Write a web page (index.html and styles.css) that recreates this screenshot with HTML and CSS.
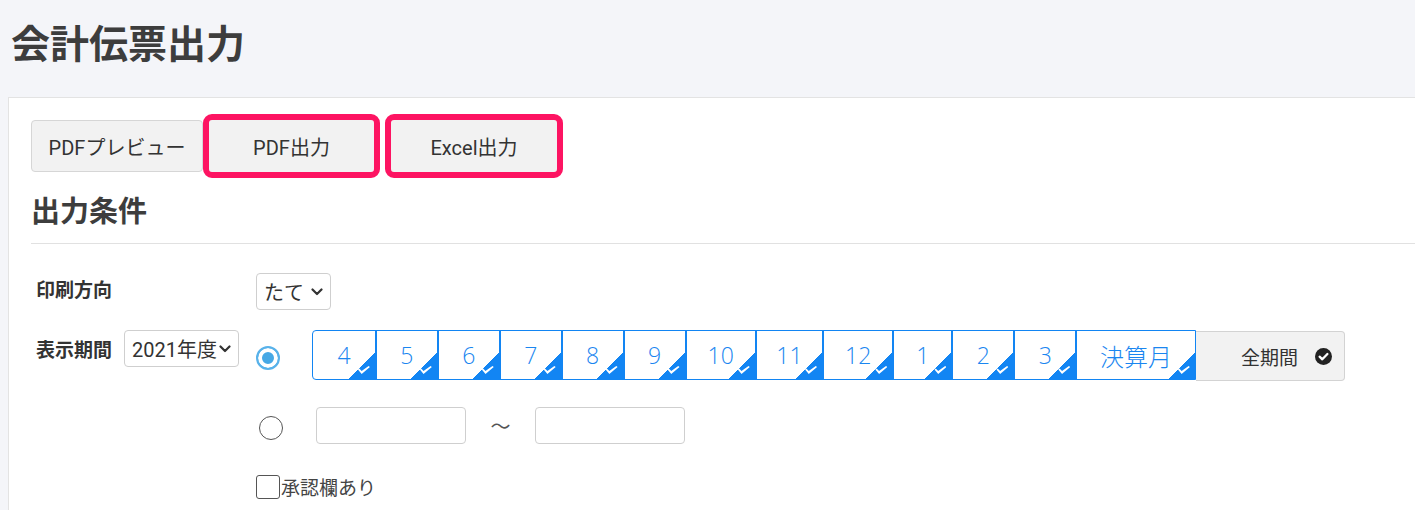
FILE: index.html
```html
<!DOCTYPE html>
<html lang="ja">
<head>
<meta charset="utf-8">
<title>会計伝票出力</title>
<link rel="stylesheet" href="styles.css">
</head>
<body>
<header class="page-head">
  <h1 class="page-title">会計伝票出力</h1>
</header>
<main class="panel">
  <div class="actions">
    <button class="btn btn-preview" type="button">PDFプレビュー</button>
    <button class="btn btn-hl btn-pdf" type="button">PDF出力</button>
    <button class="btn btn-hl btn-excel" type="button">Excel出力</button>
  </div>
  <h2 class="section-title">出力条件</h2>
  <hr class="rule">
  <div class="form">
    <div class="label label-orient">印刷方向</div>
    <div class="select select-orient">
      <span>たて</span>
      <svg class="chev" width="12" height="8" viewBox="0 0 12 8"><path d="M1.5 1.5 L6 6 L10.5 1.5" fill="none" stroke="#333" stroke-width="2.2" stroke-linecap="round" stroke-linejoin="round"/></svg>
    </div>

    <div class="label label-period">表示期間</div>
    <div class="select select-year">
      <span>2021年度</span>
      <svg class="chev" width="12" height="8" viewBox="0 0 12 8"><path d="M1.5 1.5 L6 6 L10.5 1.5" fill="none" stroke="#333" stroke-width="2.2" stroke-linecap="round" stroke-linejoin="round"/></svg>
    </div>
    <div class="period">
      <div class="period-line">
        <input class="radio radio-on" type="radio" name="mode" checked>
        <div class="months">
          <span class="month">4</span>
          <span class="month">5</span>
          <span class="month">6</span>
          <span class="month">7</span>
          <span class="month">8</span>
          <span class="month">9</span>
          <span class="month month-d2">10</span>
          <span class="month month-d2 month-11">11</span>
          <span class="month month-d2">12</span>
          <span class="month month-1">1</span>
          <span class="month">2</span>
          <span class="month">3</span>
          <span class="month month-close">決算月</span>
        </div>
        <button class="all" type="button">
          <span>全期間</span>
          <svg width="17" height="17" viewBox="0 0 17 17"><circle cx="8.5" cy="8.5" r="8.5" fill="#222"/><path d="M4.6 8.7 L7.3 11.3 L12.4 6" fill="none" stroke="#fff" stroke-width="2.3" stroke-linecap="round" stroke-linejoin="round"/></svg>
        </button>
      </div>
      <div class="period-line range-line">
        <input class="radio radio-off" type="radio" name="mode">
        <input class="date-input" type="text">
        <span class="tilde">〜</span>
        <input class="date-input" type="text">
      </div>
      <label class="approve"><input class="check" type="checkbox">承認欄あり</label>
    </div>
  </div>
</main>
</body>
</html>
```

FILE: styles.css
```css
html, body {
  margin: 0;
  padding: 0;
}

body {
  background: #f4f5f9;
  font-family: Roboto, "Noto Sans CJK JP", sans-serif;
  color: #333;
}

.page-head {
  height: 97px;
  box-sizing: border-box;
  padding: 13px 0 0 11px;
}

.page-title {
  margin: 0;
  font-family: "Noto Sans CJK JP", sans-serif;
  font-size: 39px;
  line-height: 56px;
  font-weight: 700;
  color: #3d3d3d;
}

.panel {
  display: block;
  margin-left: 8px;
  background: #fff;
  border-top: 1px solid #e3e3e3;
  border-left: 1px solid #e3e3e3;
  padding: 22px 0 0 22px;
  box-sizing: border-box;
  min-height: calc(100vh - 97px);
}

.actions {
  display: flex;
  align-items: center;
}

.btn {
  height: 52px;
  box-sizing: border-box;
  font-family: Roboto, "Noto Sans CJK JP", sans-serif;
  font-size: 20px;
  color: #333;
  background: #f2f2f2;
  border: 1px solid #d6d6d6;
  border-radius: 4px;
  padding: 0;
  text-align: center;
}

.btn-preview {
  width: 172px;
}

.btn-hl {
  border-color: #f2f2f2;
  outline: 6px solid #fd1462;
  outline-offset: 0;
  border-radius: 3px;
}

.btn-pdf {
  width: 165px;
  margin-left: 6px;
}

.btn-excel {
  width: 166px;
  margin-left: 17px;
}

.section-title {
  margin: 17px 0 0;
  font-family: "Noto Sans CJK JP", sans-serif;
  font-size: 29px;
  line-height: 40px;
  font-weight: 700;
  color: #3d3d3d;
}

.rule {
  border: 0;
  border-top: 1px solid #e1e1e1;
  margin: 14px 0 0;
}

.form {
  display: grid;
  grid-template-columns: 93px 132px 1fr;
  row-gap: 19px;
  align-items: start;
  margin-top: 29px;
}

.label {
  padding-left: 5px;
  font-family: "Noto Sans CJK JP", sans-serif;
  font-size: 19px;
  line-height: 26px;
  font-weight: 700;
  color: #333;
}

.label-orient {
  grid-column: 1;
  margin-top: 3px;
}

.label-period {
  grid-column: 1;
  margin-top: 7px;
}

.select {
  display: flex;
  align-items: center;
  justify-content: space-between;
  height: 37px;
  box-sizing: border-box;
  border: 1px solid #cfcfcf;
  border-radius: 4px;
  padding: 0 7px 0 7px;
  font-size: 20px;
  color: #333;
  background: #fff;
  justify-self: start;
}

.select-orient {
  grid-column: 3;
  width: 75px;
}

.select-year {
  grid-column: 2;
  width: 115px;
  margin-top: 1px;
}

.chev {
  flex: none;
}

.period {
  grid-column: 3;
}

.period-line {
  display: flex;
  align-items: center;
}

.radio {
  appearance: none;
  -webkit-appearance: none;
  width: 24px;
  height: 24px;
  box-sizing: border-box;
  border-radius: 50%;
  margin: 0;
  flex: none;
  background: #fff;
}

.radio-on {
  border: 2px solid #58b2ea;
  background: #46a8e5;
  box-shadow: inset 0 0 0 4px #fff;
  margin: 6px 32px 0 0;
}

.radio-off {
  border: 1.5px solid #555;
  margin: 5px 33px 0 3px;
}

.months {
  display: flex;
  flex: none;
  height: 50px;
  box-sizing: border-box;
  border: 1px solid #1285f3;
  border-radius: 4px 0 0 4px;
}

.month {
  position: relative;
  display: flex;
  align-items: center;
  justify-content: center;
  padding: 0 23.4px;
  border-left: 2px solid #1285f3;
  font-family: "Open Sans", "Noto Sans CJK JP", sans-serif;
  font-weight: 300;
  font-size: 23px;
  color: #1a86f0;
  overflow: hidden;
}

.month:first-child {
  border-left: 0;
  padding: 0 24.4px;
}

.month-d2 {
  padding: 0 21px;
}

.month-11 {
  padding: 0 19.5px;
}

.month-1 {
  padding: 0 22px;
}

.month-close {
  font-family: "Noto Sans CJK JP", sans-serif;
  font-size: 24px;
  padding: 0 22.8px;
}

.month::before {
  content: "";
  position: absolute;
  right: 0;
  bottom: 0;
  width: 27px;
  height: 26px;
  background: linear-gradient(to top left, #1285f3 50%, transparent 50%);
}

.month::after {
  content: "";
  position: absolute;
  right: 5px;
  bottom: 5px;
  width: 12px;
  height: 8px;
  background: #fff;
  clip-path: polygon(0 45%, 11% 31%, 31% 62%, 89% 0, 100% 14%, 31% 100%);
}

.all {
  display: flex;
  flex: none;
  align-items: center;
  gap: 17px;
  height: 50px;
  width: 149px;
  box-sizing: border-box;
  margin-top: 2px;
  padding: 0 13px 0 45px;
  background: #f2f2f2;
  border: 1px solid #d3d3d3;
  border-left: 0;
  border-radius: 0 4px 4px 0;
  font-family: "Noto Sans CJK JP", sans-serif;
  font-size: 19px;
  color: #333;
  white-space: nowrap;
}

.all svg {
  flex: none;
}

.range-line {
  margin-top: 26px;
}

.date-input {
  width: 150px;
  height: 37px;
  box-sizing: border-box;
  border: 1px solid #cfcfcf;
  border-radius: 4px;
  margin: 0;
  padding: 0 8px;
  background: #fff;
}

.tilde {
  width: 69px;
  text-align: center;
  font-family: "Noto Sans CJK JP", sans-serif;
  font-size: 20px;
  color: #555;
}

.approve {
  display: flex;
  align-items: center;
  margin-top: 29px;
  font-family: "Noto Sans CJK JP", sans-serif;
  font-size: 19px;
  color: #444;
}

.check {
  appearance: none;
  -webkit-appearance: none;
  width: 24px;
  height: 24px;
  box-sizing: border-box;
  border: 1.5px solid #555;
  border-radius: 3px;
  margin: 0 1px 0 0;
  background: #fff;
}
```
